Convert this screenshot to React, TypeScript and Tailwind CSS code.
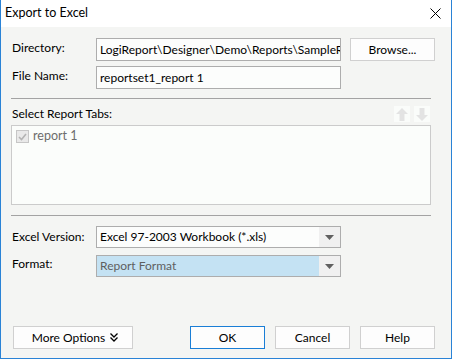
import React from "react";

function Arrow() {
  return (
    <svg width="9" height="5" viewBox="0 0 9 5">
      <path d="M0 0 H9 L4.5 5 Z" fill="#606060" />
    </svg>
  );
}

function Combo({ text, blue }: { text: string; blue?: boolean }) {
  return (
    <div className={"flex w-[245px] h-[22px] border border-[#adadad] " + (blue ? "bg-[#c4e2f3]" : "bg-[#fcfdfc]")}>
      <div className={"flex-1 flex items-center pl-[3px] " + (blue ? "text-[#5f5f5f]" : "text-black")}>{text}</div>
      <div className="w-[21px] flex items-center justify-center bg-[#f0f0f0]">
        <Arrow />
      </div>
    </div>
  );
}

function Btn({ children, w, primary }: { children: React.ReactNode; w: string; primary?: boolean }) {
  return (
    <div
      className={
        "h-[23px] flex items-center justify-center bg-[#fdfdfd] border " +
        w +
        " " +
        (primary ? "border-[#1a7ed6]" : "border-[#d0d0d0]")
      }
    >
      {children}
    </div>
  );
}

export default function App() {
  return (
    <div
      className="w-[452px] h-[359px] flex flex-col border-l border-r border-b border-[#2a83d6] text-[12px] text-black leading-none"
      style={{ fontFamily: 'Lato, "Noto Sans", sans-serif' }}
    >
      <div className="h-[27px] bg-white flex items-center justify-between pl-[4px] pr-[10px]">
        <span className="text-[12.5px]">Export to Excel</span>
        <svg width="11" height="11" viewBox="0 0 11 11">
          <path d="M0.5 0.5 L10.5 10.5 M10.5 0.5 L0.5 10.5" stroke="#000" strokeWidth="1" />
        </svg>
      </div>
      <div className="flex-1 bg-[#f4f5f3] flex flex-col pl-[10px] pt-[11px]">
        <div className="flex items-center h-[23px]">
          <div className="w-[85px] pl-[1px] self-start pt-[4px]">Directory:</div>
          <div className="w-[245px] h-[23px] border border-[#adadad] bg-[#fcfdfc] flex items-center pl-[3px] overflow-hidden whitespace-nowrap">
            <span className="overflow-hidden">LogiReport\Designer\Demo\Reports\SampleRepor</span>
          </div>
          <div className="ml-[9px]">
            <Btn w="w-[85px]">Browse...</Btn>
          </div>
        </div>
        <div className="flex items-center h-[23px] mt-[5px]">
          <div className="w-[85px] pl-[1px] self-start pt-[4px]">File Name:</div>
          <div className="w-[245px] h-[23px] border border-[#adadad] bg-[#fcfdfc] flex items-center pl-[3px]">
            reportset1_report 1
          </div>
        </div>
        <div className="mt-[9px] w-[420px] h-px bg-[#a3a3a3]" />
        <div className="mt-[7px] w-[420px] h-[16px] flex items-center justify-between">
          <span className="pl-[1px]">Select Report Tabs:</span>
          <div className="flex gap-[4px] pr-[1px]">
            <div className="w-[16px] h-[16px] bg-[#fafcfa] flex items-center justify-center">
              <svg width="12" height="13" viewBox="0 0 12 13">
                <path d="M6 0 L12 6 H8.5 V13 H3.5 V6 H0 Z" fill="#e3e3e3" />
              </svg>
            </div>
            <div className="w-[16px] h-[16px] bg-[#fafcfa] flex items-center justify-center">
              <svg width="12" height="13" viewBox="0 0 12 13">
                <path d="M6 13 L12 7 H8.5 V0 H3.5 V7 H0 Z" fill="#e3e3e3" />
              </svg>
            </div>
          </div>
        </div>
        <div className="mt-[3px] w-[420px] h-[80px] border border-[#cbcbcb] bg-[#fbfdfb] pl-[4px] pt-[4px]">
          <div className="flex items-center gap-[4px] h-[13px]">
            <div className="w-[13px] h-[13px] border border-[#c6c6c6] bg-[#e9e9e9] flex items-center justify-center">
              <svg width="9" height="8" viewBox="0 0 9 8">
                <path d="M1 4 L3.5 6.5 L8 1" stroke="#b3b3b3" strokeWidth="1.6" fill="none" />
              </svg>
            </div>
            <span className="text-[#6d6d6d] text-[12.5px]">report 1</span>
          </div>
        </div>
        <div className="mt-[10px] w-[420px] h-px bg-[#a3a3a3]" />
        <div className="flex items-center mt-[10px]">
          <div className="w-[85px] pl-[1px]">Excel Version:</div>
          <Combo text="Excel 97-2003 Workbook (*.xls)" />
        </div>
        <div className="flex items-center mt-[7px]">
          <div className="w-[85px] pl-[1px] self-start pt-[3px]">Format:</div>
          <Combo text="Report Format" blue />
        </div>
        <div className="mt-[49px] flex items-center pl-[2px]">
          <Btn w="w-[120px]">
            <span className="flex items-center gap-[5px] pl-[4px]">
              More Options
              <svg width="8" height="9" viewBox="0 0 8 9">
                <path d="M0.5 0.5 L4 4 L7.5 0.5 M0.5 4.5 L4 8 L7.5 4.5" stroke="#000" strokeWidth="1.3" fill="none" />
              </svg>
            </span>
          </Btn>
          <div className="ml-[57px]">
            <Btn w="w-[75px]" primary>OK</Btn>
          </div>
          <div className="ml-[10px]">
            <Btn w="w-[75px]">Cancel</Btn>
          </div>
          <div className="ml-[10px]">
            <Btn w="w-[75px]">Help</Btn>
          </div>
        </div>
      </div>
    </div>
  );
}
